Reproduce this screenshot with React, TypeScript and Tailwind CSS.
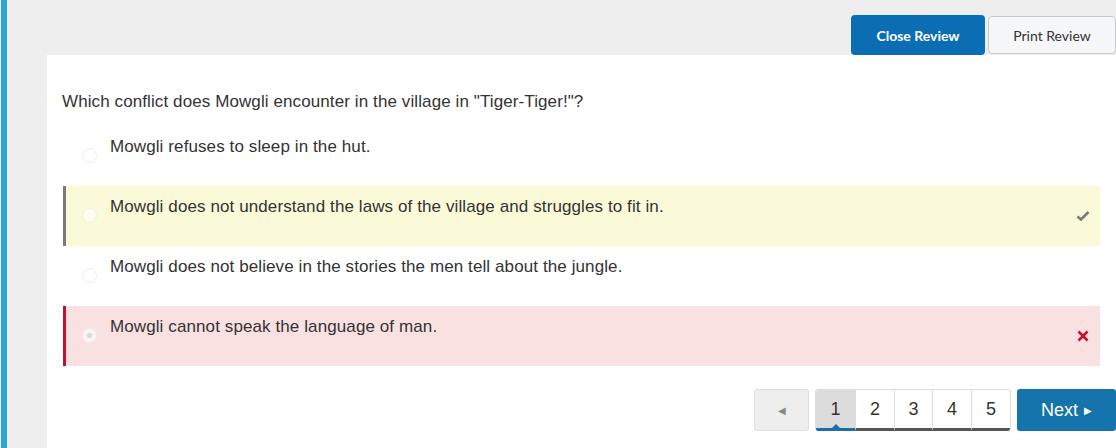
import React from 'react';

interface Choice {
  id: number;
  text: string;
  state: 'none' | 'correct' | 'wrong';
}

const choices: Choice[] = [
  { id: 1, text: 'Mowgli refuses to sleep in the hut.', state: 'none' },
  { id: 2, text: 'Mowgli does not understand the laws of the village and struggles to fit in.', state: 'correct' },
  { id: 3, text: 'Mowgli does not believe in the stories the men tell about the jungle.', state: 'none' },
  { id: 4, text: 'Mowgli cannot speak the language of man.', state: 'wrong' },
];

const pageWidths = ['w-[39px]', 'w-[39px]', 'w-[38px]', 'w-[39px]', 'w-[39px]'];

function CheckIcon() {
  return (
    <svg width="14" height="12" viewBox="0 0 14 12">
      <path d="M1.5 6.5 L5 9.5 L12.5 2" fill="none" stroke="#7a7a7a" strokeWidth="2.6" />
    </svg>
  );
}

function CrossIcon() {
  return (
    <svg width="12" height="12" viewBox="0 0 12 12">
      <path d="M1.5 1.5 L10.5 10.5 M10.5 1.5 L1.5 10.5" fill="none" stroke="#c8102e" strokeWidth="2.6" />
    </svg>
  );
}

export default function App() {
  return (
    <div className="flex h-[448px] bg-[#eeeeee] overflow-hidden font-['Liberation_Sans',Arial,sans-serif]">
      <div className="w-[6px] ml-px bg-[#2fa4d7] shrink-0" />
      <div className="flex-1 flex flex-col">
        <div className="h-[55px] flex justify-end items-start pt-[15px]">
          <button className="h-[40px] w-[134px] rounded-[4px] bg-[#0b6db4] text-white text-[14px] font-bold font-['Lato',sans-serif]">
            Close Review
          </button>
          <button className="mt-px ml-[3px] h-[38px] w-[128px] rounded-[4px] bg-[#f5f6f8] border border-[#c9c9c9] text-[#333] text-[14px] font-['Lato',sans-serif]">
            Print Review
          </button>
        </div>
        <div className="flex-1 ml-[40px] bg-white pl-[15px] pt-[36px]">
          <p className="text-[17px] leading-[22px] tracking-[0.1px] text-[#333]">
            Which conflict does Mowgli encounter in the village in "Tiger-Tiger!"?
          </p>
          <div className="mt-[13px] mr-[16px] ml-px flex flex-col">
            {choices.map((c) => (
              <div
                key={c.id}
                className={
                  'h-[60px] flex items-start border-l-[3px] ' +
                  (c.state === 'correct'
                    ? 'bg-[#fafad8] border-[#7a7a7a]'
                    : c.state === 'wrong'
                    ? 'bg-[#f9e1e1] border-[#c8102e]'
                    : 'border-transparent')
                }
              >
                <div className="ml-[16px] mt-[22px] w-[15px] h-[15px] rounded-full border border-[#eeeeee] bg-white/60 flex items-center justify-center shrink-0">
                  {c.state === 'wrong' && <div className="w-[5px] h-[5px] rounded-full bg-[#d9d9d9]" />}
                </div>
                <div className="ml-[13px] mt-[10px] flex-1 text-[17px] leading-[22px] tracking-[0.1px] text-[#333]">{c.text}</div>
                <div className="self-center mr-[10px] w-[14px] flex justify-center">
                  {c.state === 'correct' && <CheckIcon />}
                  {c.state === 'wrong' && <CrossIcon />}
                </div>
              </div>
            ))}
          </div>
          <div className="mt-[23px] flex justify-end">
            <button className="h-[42px] w-[55px] rounded-[3px] bg-[#eeeeee] border border-[#dddddd] text-[#888] text-[10px]">
              ◀
            </button>
            <div className="ml-[6px] h-[42px] flex rounded-[3px] border border-[#dddddd] border-b-0 overflow-hidden">
              {[1, 2, 3, 4, 5].map((n, i) => (
                <div
                  key={n}
                  className={
                    'relative flex items-center justify-center text-[18px] text-[#333] border-b-[3px] ' +
                    pageWidths[i] +
                    (n === 1
                      ? ' bg-[#dcdcdc] border-[#1a6fa8]'
                      : ' border-l border-l-[#dddddd] border-b-[#555555] bg-white')
                  }
                >
                  {n}
                  {n === 1 && (
                    <div className="absolute bottom-0 left-1/2 -translate-x-1/2 w-0 h-0 border-l-[4px] border-r-[4px] border-b-[4px] border-l-transparent border-r-transparent border-b-[#1a6fa8]" />
                  )}
                </div>
              ))}
            </div>
            <button className="ml-[6px] h-[42px] w-[99px] rounded-[3px] bg-[#1473aa] text-white text-[18px] flex items-center justify-center gap-[6px]">
              Next <span className="text-[10px]">▶</span>
            </button>
          </div>
        </div>
      </div>
    </div>
  );
}
